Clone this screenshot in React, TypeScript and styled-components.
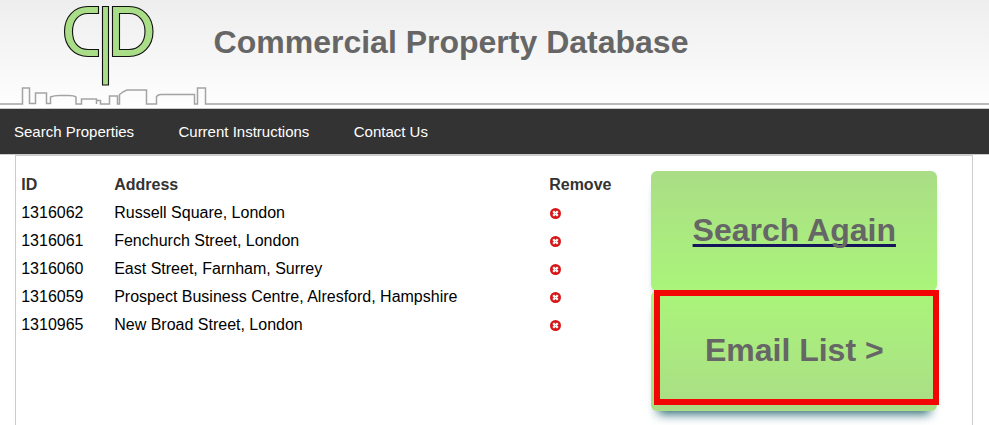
import React from "react";
import styled, { createGlobalStyle } from "styled-components";

const GlobalStyle = createGlobalStyle`
  * { box-sizing: border-box; }
  body {
    margin: 0;
    background: #fff;
    color: #000;
    font-family: "Liberation Sans", Arial, sans-serif;
    overflow: hidden;
  }
`;

const Page = styled.div`
  display: flex;
  flex-direction: column;
  height: 425px;
  overflow: hidden;
`;

const Header = styled.header`
  position: relative;
  display: flex;
  height: 109px;
  flex: none;
  background: linear-gradient(#eeeeee, #fdfdfd 100px, #ffffff);
  border-bottom: 1px solid #c9cbc9;
`;

const Artwork = styled.svg`
  display: block;
  flex: none;
  width: 213.6px;
  height: 108px;
`;

const GroundLine = styled.div`
  position: absolute;
  left: 206px;
  right: 0;
  top: 103px;
  height: 2px;
  background: #b9bab8;
`;

const Title = styled.h1`
  margin: 24px 0 0;
  font-size: 32px;
  line-height: 37px;
  white-space: nowrap;
  color: #666;
`;

const Nav = styled.nav`
  display: flex;
  flex: none;
  align-items: center;
  gap: 44.4px;
  height: 46px;
  padding: 0 14px;
  background: #333;
  border-bottom: 1px solid #ccc;
`;

const NavLink = styled.a`
  font-size: 15px;
  line-height: 18px;
  color: #fff;
  text-decoration: none;
`;

const Content = styled.main`
  display: flex;
  flex: 1;
  width: 958px;
  margin-left: 15px;
  padding: 15px 35px 0 5.2px;
  border: 1px solid #ccc;
  border-bottom: 0;
`;

const PropertyTable = styled.div`
  width: 629.8px;
  flex: none;
  font-size: 16px;
`;

const Row = styled.div<{ $head?: boolean }>`
  display: grid;
  grid-template-columns: 93px 435px 1fr;
  align-items: center;
  height: 28px;
  line-height: 28px;
  font-weight: ${(p) => (p.$head ? 700 : 400)};
  color: ${(p) => (p.$head ? "#333" : "#000")};
`;

const RemoveButton = styled.button`
  display: flex;
  width: 12px;
  height: 12px;
  margin: 1px 0 0 0.8px;
  padding: 0;
  border: 0;
  background: none;
`;

const Actions = styled.aside`
  position: relative;
  flex: none;
  width: 286px;
  height: 240px;
`;

const ActionButton = styled.a<{ $flipped?: boolean }>`
  display: flex;
  align-items: center;
  justify-content: center;
  height: 120px;
  padding: 0 0 2px 0.6px;
  border-radius: 6px;
  background: linear-gradient(
    ${(p) => (p.$flipped ? "#aaf57a, #aadd86" : "#aadd86, #aaf57a")}
  );
  box-shadow: 0 10px 10px -7px #276873;
  color: #666;
  font-size: 32px;
  font-weight: 700;
  line-height: 37px;
  white-space: nowrap;
  text-decoration: ${(p) => (p.$flipped ? "none" : "underline #15155c 3px")};
  text-underline-offset: 3px;
  text-decoration-skip-ink: none;
`;

const Highlight = styled.div`
  position: absolute;
  left: 3px;
  top: 119px;
  width: 285px;
  height: 115px;
  border: 6px solid #f20505;
  pointer-events: none;
`;

const properties = [
  { id: "1316062", address: "Russell Square, London" },
  { id: "1316061", address: "Fenchurch Street, London" },
  { id: "1316060", address: "East Street, Farnham, Surrey" },
  { id: "1316059", address: "Prospect Business Centre, Alresford, Hampshire" },
  { id: "1310965", address: "New Broad Street, London" },
];

const HeaderArtwork = () => (
  <Artwork viewBox="0 0 213.6 108" aria-hidden="true">
    <g fill="#aadd88" stroke="#111" strokeWidth="1.1">
      <path d="M98.5 6.5H88C74 6.5 64.5 17 64.5 31.5S74 56.5 88 56.5H98.5V49.5H88C78 49.5 72.5 42 72.5 31.5S78 13.5 88 13.5H98.5Z" />
      <path d="M102.5 6.5H108.5V85H102.5Z" />
      <path
        fillRule="evenodd"
        d="M112.5 6.5H129C143 6.5 153 17 153 31.5S143 56.5 129 56.5H112.5ZM119.5 13.5V49.5H129C139 49.5 145 42 145 31.5S139 13.5 129 13.5Z"
      />
    </g>
    <path
      d="M0 104H22.5V88H29.5V103.5H35.5V93H46.5V103.5H50.5V97Q54 95.5 59 95.5H69Q74 95.5 76 97V104H81.5V99H96.5V104M96.5 100.5H100.5V104H109.5V96H117.5V104H119.5V94.5Q123 91.5 127 90H146.5V104H156.5V96.5Q158 94.5 161 94.5H194.5V104H197.5V88H205.5V104H206"
      fill="none"
      stroke="#a3a4a2"
      strokeWidth="1.5"
    />
  </Artwork>
);

const RemoveIcon = () => (
  <svg width="12" height="12" viewBox="0 0 12 12" aria-hidden="true">
    <circle cx="5.5" cy="5.5" r="5.5" fill="#d81616" />
    <path d="M3.2 3.2L7.8 7.8M7.8 3.2L3.2 7.8" stroke="#fff" strokeWidth="2.3" />
    <circle cx="5.5" cy="5.5" r="0.6" fill="#e58b8b" />
  </svg>
);

export default function App() {
  return (
    <>
      <GlobalStyle />
      <Page>
        <Header>
          <HeaderArtwork />
          <GroundLine />
          <Title>Commercial Property Database</Title>
        </Header>
        <Nav>
          <NavLink>Search Properties</NavLink>
          <NavLink>Current Instructions</NavLink>
          <NavLink>Contact Us</NavLink>
        </Nav>
        <Content>
          <PropertyTable>
            <Row $head>
              <span>ID</span>
              <span>Address</span>
              <span>Remove</span>
            </Row>
            {properties.map((p) => (
              <Row key={p.id}>
                <span>{p.id}</span>
                <span>{p.address}</span>
                <RemoveButton aria-label="Remove">
                  <RemoveIcon />
                </RemoveButton>
              </Row>
            ))}
          </PropertyTable>
          <Actions>
            <ActionButton>Search Again</ActionButton>
            <ActionButton $flipped>Email List &gt;</ActionButton>
            <Highlight />
          </Actions>
        </Content>
      </Page>
    </>
  );
}
